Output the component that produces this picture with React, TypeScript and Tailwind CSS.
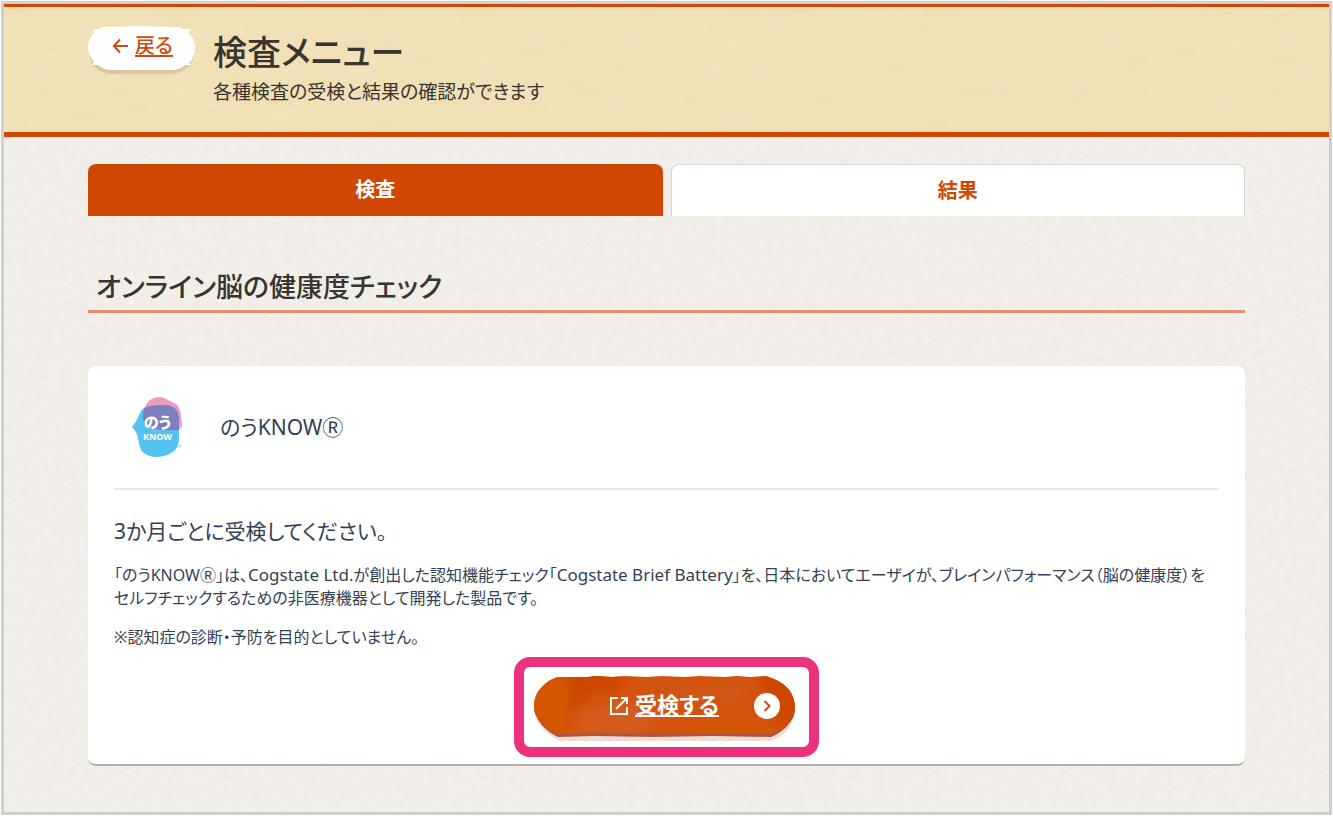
import React, { useState } from "react";

type TabId = "exam" | "result";

const tabs: { id: TabId; label: string }[] = [
  { id: "exam", label: "検査" },
  { id: "result", label: "結果" },
];

// Paper grain laid over a flat colour
function PaperTexture({ id, frequency, color }: { id: string; frequency: string; color: string }) {
  return (
    <svg className="pointer-events-none absolute inset-0 h-full w-full" aria-hidden="true">
      <filter id={id} x="0" y="0" width="100%" height="100%" colorInterpolationFilters="sRGB">
        <feTurbulence type="fractalNoise" baseFrequency={frequency} numOctaves="3" seed="4" />
        <feColorMatrix values={color} />
      </filter>
      <rect width="100%" height="100%" filter={`url(#${id})`} />
    </svg>
  );
}

function BackShape() {
  return (
    <svg className="absolute inset-0 h-full w-full" viewBox="0 0 107 48" preserveAspectRatio="none" aria-hidden="true">
      <path d="M1 22 L1 28 Q3 39 9 43 Q15 48 24 48 H82 Q92 48 99 42 Q106 35 106 26 V22Z" fill="#dcc8a4" />
      <path
        d="M4 4 Q9 4 12 2 Q18 0 25 1 L50 0 L84 1 Q91 0 96 3 L103 3 L100 6 Q107 13 107 22 Q107 31 101 37 L103 39 L97 39 Q92 44 84 44 H25 Q15 44 10 39 L4 39 L6 36 Q0 29 0 21 Q0 12 7 6Z"
        fill="#fff"
      />
    </svg>
  );
}

function ExamShape() {
  return (
    <svg className="absolute inset-0 h-full w-full" viewBox="0 0 261 65" preserveAspectRatio="none" aria-hidden="true">
      <defs>
        <clipPath id="exam-clip">
          <path d="M0 30 Q0 19 7 12 Q15 3 24 1 L54 1 L62 0 L78 1 L92 0 L112 1 L128 0 L150 1 L166 0 L190 1 L203 0 L216 1 L232 0 L240 3 Q250 7 256 15 Q261 23 261 32 Q261 42 253 49 Q245 56 236 58 L214 57 L196 58 L164 57 L140 58 L110 57 L84 58 L58 57 L24 58 Q14 54 7 46 Q0 39 0 30Z" />
        </clipPath>
        <filter id="exam-soft">
          <feGaussianBlur stdDeviation="4" />
        </filter>
      </defs>
      <path d="M1 38 Q6 56 26 65 H236 Q255 60 260 40Z" fill="#ecdcd7" />
      <path d="M0 34 Q5 52 24 61 L60 60 L120 61 L180 60 L237 61 Q257 53 261 34Z" fill="#a95640" />
      <g clipPath="url(#exam-clip)">
        <rect width="261" height="65" fill="#d3530e" />
        <g filter="url(#exam-soft)">
          <path d="M-10 -10 H34 V70 H-10Z" fill="#d45602" />
          <path d="M34 -10 H92 L84 18 L60 14 L46 30 L36 36Z" fill="#ce4706" />
          <path d="M44 36 L94 24 L128 42 L106 58 H42Z" fill="#d45b1a" />
          <path d="M120 8 L174 12 L214 6 L206 28 L150 24Z" fill="#d05716" />
          <path d="M160 50 L196 42 L232 48 V70 H160Z" fill="#d35600" />
          <path d="M224 -10 H271 V50 L242 46 L228 18Z" fill="#d04602" />
        </g>
      </g>
    </svg>
  );
}

function KnowLogo() {
  return (
    <div className="relative flex h-16 w-[50px] flex-col items-center pt-[18px] pl-px text-white">
      <svg className="absolute inset-0 h-full w-full" viewBox="0 0 50 64" aria-hidden="true">
        <path
          d="M11 18 Q13 9 18 5 Q25 0 32 3 L44 9 Q48 12 49 20 L50 29 Q50 34 46 35 L30 36 L12 31Z"
          fill="#ee9bc0"
        />
        <path
          d="M0 32 Q5 26 8 18 Q10 13 15 12 Q23 9 32 10 Q43 10 46 18 Q47 22 47 28 V43 Q47 52 42 56 Q34 62 23 62 Q13 61 9 55 Q7 50 6 43 Q5 37 0 32Z"
          fill="#55c3f1"
        />
        <path
          d="M11 22 Q11 17 12 13 Q20 10 32 10 Q43 10 46 18 Q47 22 47 28 V35 Q31 36 18 33 Q11 30 11 22Z"
          fill="#7b7fbd"
        />
        <circle cx="48" cy="51" r="1" fill="none" stroke="#8bd4f4" />
      </svg>
      <span className="relative text-[15px] leading-[18px] font-black">のう</span>
      <span className="relative text-[9px] leading-3 font-bold">KNOW</span>
    </div>
  );
}

function PageHeader() {
  return (
    <header className="relative border-t-[3px] border-b-[5px] border-[#cf4700] bg-[#f1e3ba]">
      <PaperTexture id="header-grain" frequency="0.02 0.09" color="0 0 0 0 0.88  0 0 0 0 0.78  0 0 0 0 0.5  0.2 0 0 0 -0.04" />
      <div className="relative flex items-start gap-[18px] px-[84px] pt-[19px] pb-[26px]">
        <a href="#back" className="relative flex h-12 w-[107px] justify-center gap-[7px] pt-[6px] pl-[2px] text-[#d04a0a]">
          <BackShape />
          <svg className="relative mt-[6px] h-4 w-4" viewBox="0 0 16 16" fill="none" stroke="currentColor" strokeWidth="2" aria-hidden="true">
            <path d="M8 1.5 L1.8 8 L8 14.5 M2 8 H16" />
          </svg>
          <span className="relative text-[20px] leading-7 font-medium underline underline-offset-2">戻る</span>
        </a>
        <div className="text-[#373530]">
          <h1 className="text-[34px] leading-[52px] font-medium">検査メニュー</h1>
          <p className="text-[19px] leading-7">各種検査の受検と結果の確認ができます</p>
        </div>
      </div>
    </header>
  );
}

export default function App() {
  const [activeTab, setActiveTab] = useState<TabId>("exam");

  return (
    <div className="min-h-screen bg-white p-px pb-0.5 flex font-['Noto_Sans','Noto_Sans_CJK_JP',sans-serif] [font-feature-settings:'palt']" lang="ja">
      <div className="flex-1 border-[3px] border-[#cfcfcf] bg-[#f3f0eb] flex flex-col">
        <PageHeader />

        <main className="relative flex-1 px-[84px] pt-[27px] pb-10">
          <PaperTexture id="page-grain" frequency="0.16" color="0 0 0 0 0.84  0 0 0 0 0.78  0 0 0 0 0.72  0.24 0 0 0 -0.06" />

          <div className="relative grid grid-cols-2 gap-2" role="tablist">
            {tabs.map((tab) => (
              <button
                key={tab.id}
                type="button"
                role="tab"
                aria-selected={activeTab === tab.id}
                onClick={() => setActiveTab(tab.id)}
                className={`h-[52px] rounded-t-lg text-[20px] font-bold ${
                  activeTab === tab.id
                    ? "bg-[#cf4700] text-white"
                    : "border-x border-t border-[#d6d5d3] bg-white text-[#cf4700]"
                }`}
              >
                {tab.label}
              </button>
            ))}
          </div>

          <h2 className="relative mt-[52px] border-b-[3px] border-[#ea8c70] px-2 pb-1 text-[27px] leading-[38px] font-medium text-[#373530]">
            オンライン脳の健康度チェック
          </h2>

          <section className="relative mt-[53px] rounded-lg border-b-2 border-[#b3b0ad] bg-white px-[26px] pb-[7px] text-[#334155]">
            <div className="flex h-[124px] items-center gap-[38px] border-b-2 border-[#ebebeb] pl-[18px]">
              <KnowLogo />
              <h3 className="text-[21px] leading-8">のうKNOWⓇ</h3>
            </div>

            <p className="mt-[25px] text-[21px] leading-8">3か月ごとに受検してください。</p>
            <p className="mt-4 text-[16px] leading-[23px]">
              「のうKNOWⓇ」は、<span className="text-[17px]">Cogstate Ltd.</span>が創出した認知機能チェック「
              <span className="text-[17px]">Cogstate Brief Battery</span>
              」を、日本においてエーザイが、ブレインパフォーマンス（脳の健康度）を
              <br />
              セルフチェックするための非医療機器として開発した製品です。
            </p>
            <p className="mt-4 text-[16px] leading-[23px]">※認知症の診断・予防を目的としていません。</p>

            <div className="mx-auto mt-2 w-[305px] rounded-2xl border-10 border-[#ec317f] pt-[9px] pr-[14px] pb-[6px] pl-[10px]">
              <a href="#exam" className="relative flex h-[65px] items-start pt-3 text-white">
                <ExamShape />
                <svg className="relative mt-[9px] ml-[76px] h-[18px] w-[18px]" viewBox="0 0 18 18" fill="none" stroke="currentColor" strokeWidth="2" aria-hidden="true">
                  <path d="M8 1 H1 V17 H17 V10 M11 1 H17 V7 M17 1 L6 12" />
                </svg>
                <span className="relative ml-[7px] text-[22px] leading-8 font-bold underline underline-offset-2">受検する</span>
                <svg className="relative mt-[5px] mr-[15px] ml-auto h-[26px] w-[26px]" viewBox="0 0 26 26" aria-hidden="true">
                  <circle cx="13" cy="13" r="13" fill="#fff" />
                  <path d="M10.5 8 L15.5 13 L10.5 18" fill="none" stroke="#c94a13" strokeWidth="2" />
                </svg>
              </a>
            </div>
          </section>
        </main>
      </div>
    </div>
  );
}
